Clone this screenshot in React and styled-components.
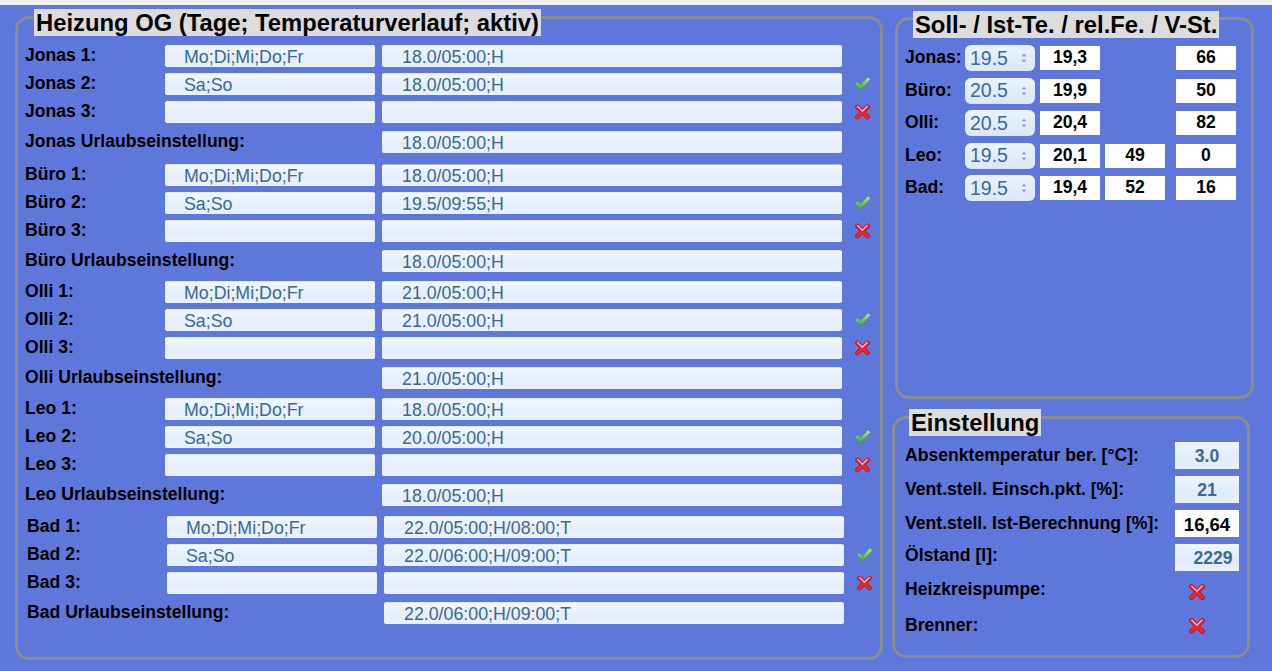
import React from "react";
import styled, { createGlobalStyle } from "styled-components";

const GlobalStyle = createGlobalStyle`
  html, body {
    margin: 0;
    padding: 0;
    background: #5e77db;
    font-family: "Liberation Sans", Arial, sans-serif;
  }
`;

const TopStrip = styled.div`
  height: 5px;
  background: #f1f1f3;
`;

const Main = styled.div`
  display: flex;
  align-items: flex-start;
  gap: 9px;
  padding: 11px 0 0 15px;
`;

const Panel = styled.div`
  box-sizing: border-box;
  flex-shrink: 0;
  width: ${(p) => p.width}px;
  height: ${(p) => p.height}px;
  margin-left: ${(p) => p.offsetLeft || 0}px;
  margin-top: ${(p) => p.offsetTop || 0}px;
  border: 3px solid #8a8c92;
  border-radius: 14px;
  display: flex;
  flex-flow: column nowrap;
  align-items: flex-start;
`;

const Title = styled.div`
  margin: ${(p) => p.top}px 0 0 ${(p) => p.left}px;
  padding: 0 2px;
  height: 27px;
  line-height: 28px;
  background: #dcdcdd;
  color: #000;
  font-size: 23.8px;
  font-weight: 700;
  white-space: nowrap;
`;

const RightColumn = styled.div`
  display: flex;
  flex-flow: column nowrap;
  gap: 17px;
`;

/* ---------- left panel ---------- */

const Groups = styled.div`
  display: flex;
  flex-flow: column nowrap;
  gap: 9px;
  margin-top: 9px;
`;

const Group = styled.div`
  display: flex;
  flex-flow: column nowrap;
  gap: 6px;
  margin-top: ${(p) => p.extra || 0}px;
  padding-left: ${(p) => (p.shift ? 9 : 7)}px;
`;

const Row = styled.div`
  display: grid;
  grid-template-columns: 133px 210px 460px 22px;
  column-gap: 7px;
  align-items: center;
  height: 22px;
  margin-top: ${(p) => (p.holiday ? 2 : 0)}px;
`;

const Label = styled.div`
  grid-column: ${(p) => (p.wide ? "span 2" : "auto")};
  color: #000;
  font-size: 17.6px;
  font-weight: 700;
  white-space: nowrap;
  line-height: 20px;
  margin-top: -2px;
`;

const Field = styled.div`
  grid-column: ${(p) => (p.col ? p.col : "auto")};
  box-sizing: border-box;
  height: 22px;
  padding-left: ${(p) => p.pad || 20}px;
  line-height: 23px;
  font-size: 17.8px;
  color: #3b6894;
  white-space: nowrap;
  background: linear-gradient(180deg, #f1f7fe 0%, #e4eefb 55%, #e8f1fc 100%);
  border-top: 1px solid ${(p) => (p.focused ? "#b3bdc9" : "#dfe9f6")};
  border-radius: 2px;
`;

const IconCell = styled.div`
  display: flex;
  align-items: center;
  padding-left: 5px;
`;

/* ---------- right top panel ---------- */

const TempRows = styled.div`
  display: flex;
  flex-flow: column nowrap;
  gap: 6.5px;
  margin-top: 7px;
  padding-left: 7px;
`;

const TempRow = styled.div`
  display: grid;
  grid-template-columns: 55px 70px 60px 60px 60px;
  column-gap: 5px;
  align-items: center;
  height: 26px;
`;

const SelectBox = styled.div`
  box-sizing: border-box;
  display: flex;
  align-items: center;
  justify-content: space-between;
  width: 70px;
  height: 26px;
  padding: 0 8px 0 5px;
  border-radius: 6px;
  background: linear-gradient(180deg, #eaf2fc 0%, #dbe7f6 100%);
  color: #386a9a;
  font-size: 19.5px;
`;

const ValueBox = styled.div`
  box-sizing: border-box;
  width: 60px;
  height: 24px;
  margin-left: ${(p) => p.push || 0}px;
  background: #fff;
  color: #000;
  font-size: 17.6px;
  font-weight: 700;
  text-align: center;
  line-height: 22px;
`;

/* ---------- settings panel ---------- */

const SettingRows = styled.div`
  display: flex;
  flex-flow: column nowrap;
  gap: 7px;
  margin-top: 6px;
  padding-left: 10px;
`;

const SettingRow = styled.div`
  display: grid;
  grid-template-columns: 270px 64px;
  align-items: center;
  min-height: 27px;
`;

const SettingLabel = styled.div`
  color: #000;
  font-size: 17.6px;
  font-weight: 700;
  white-space: nowrap;
  margin-top: ${(p) => p.lift || 0}px;
`;

const SettingInput = styled.div`
  box-sizing: border-box;
  height: 27px;
  line-height: 29px;
  font-size: ${(p) => (p.plain ? 18.5 : 17.6)}px;
  text-align: center;
  padding-left: ${(p) => p.indent || 0}px;
  color: ${(p) => (p.plain ? "#000" : "#3b6a96")};
  font-weight: 700;
  background: ${(p) =>
    p.plain ? "#fff" : "linear-gradient(180deg, #eef5fd 0%, #e0ebf9 60%, #e7f0fc 100%)"};
`;

const StatusIcon = styled.div`
  display: flex;
  align-items: center;
  padding-left: 13px;
`;

/* ---------- icons ---------- */

const CheckIcon = () => (
  <svg width="17" height="16" viewBox="0 0 17 16">
    <defs>
      <linearGradient id="ck" x1="0" y1="0" x2="0" y2="1">
        <stop offset="0" stopColor="#b2f29a" />
        <stop offset="1" stopColor="#3c9a33" />
      </linearGradient>
    </defs>
    <path
      d="M1 8 L3.8 6 L6.5 9 L14 1 L16.5 3.3 L6.5 14.5 Z"
      fill="url(#ck)"
      stroke="#4b9f41"
      strokeWidth="0.6"
      strokeLinejoin="round"
    />
  </svg>
);

const CrossIcon = () => (
  <svg width="18" height="18" viewBox="0 0 18 18">
    <path d="M3.5 3.5 L14.5 14.5 M14.5 3.5 L3.5 14.5" stroke="#c8121e" strokeWidth="4.8" strokeLinecap="round" />
    <path d="M3.5 3.5 L14.5 14.5 M14.5 3.5 L3.5 14.5" stroke="#e82a34" strokeWidth="3" strokeLinecap="round" />
    <path d="M3.8 3.2 L9 8.2 M14 3 L9.6 7.4" stroke="#f8b5bb" strokeWidth="1.4" strokeLinecap="round" />
  </svg>
);

const SpinArrows = () => (
  <svg width="6" height="10" viewBox="0 0 6 10">
    <path d="M3 0.5 L5.5 3.5 L0.5 3.5 Z M3 9.5 L5.5 6.5 L0.5 6.5 Z" fill="#93a6bd" />
  </svg>
);

/* ---------- data ---------- */

const rooms = [
  { name: "Jonas", temps: ["18.0/05:00;H", "18.0/05:00;H", "18.0/05:00;H"] },
  { name: "Büro", temps: ["18.0/05:00;H", "19.5/09:55;H", "18.0/05:00;H"], focused: true, extra: 2 },
  { name: "Olli", temps: ["21.0/05:00;H", "21.0/05:00;H", "21.0/05:00;H"] },
  { name: "Leo", temps: ["18.0/05:00;H", "20.0/05:00;H", "18.0/05:00;H"] },
  {
    name: "Bad",
    temps: ["22.0/05:00;H/08:00;T", "22.0/06:00;H/09:00;T", "22.0/06:00;H/09:00;T"],
    shift: true,
    extra: 1,
  },
];

const climate = [
  { name: "Jonas", soll: "19.5", ist: "19,3", feuchte: "", vst: "66" },
  { name: "Büro", soll: "20.5", ist: "19,9", feuchte: "", vst: "50" },
  { name: "Olli", soll: "20.5", ist: "20,4", feuchte: "", vst: "82" },
  { name: "Leo", soll: "19.5", ist: "20,1", feuchte: "49", vst: "0" },
  { name: "Bad", soll: "19.5", ist: "19,4", feuchte: "52", vst: "16" },
];

const RoomGroup = ({ room }) => (
  <Group shift={room.shift} extra={room.extra}>
    <Row>
      <Label>{room.name} 1:</Label>
      <Field pad={19}>Mo;Di;Mi;Do;Fr</Field>
      <Field focused={room.focused}>{room.temps[0]}</Field>
    </Row>
    <Row>
      <Label>{room.name} 2:</Label>
      <Field pad={19}>Sa;So</Field>
      <Field>{room.temps[1]}</Field>
      <IconCell>
        <CheckIcon />
      </IconCell>
    </Row>
    <Row>
      <Label>{room.name} 3:</Label>
      <Field />
      <Field />
      <IconCell>
        <CrossIcon />
      </IconCell>
    </Row>
    <Row holiday>
      <Label wide>{room.name} Urlaubseinstellung:</Label>
      <Field col={3}>{room.temps[2]}</Field>
    </Row>
  </Group>
);

const App = () => {
  return (
    <>
      <GlobalStyle />
      <TopStrip />
      <Main>
        <Panel width={868} height={644}>
          <Title top={-10} left={16}>
            Heizung OG (Tage; Temperaturverlauf; aktiv)
          </Title>
          <Groups>
            {rooms.map((room) => (
              <RoomGroup key={room.name} room={room} />
            ))}
          </Groups>
        </Panel>

        <RightColumn>
          <Panel width={359} height={382} offsetLeft={3} offsetTop={1}>
            <Title top={-9} left={15}>
              Soll- / Ist-Te. / rel.Fe. / V-St.
            </Title>
            <TempRows>
              {climate.map((c) => (
                <TempRow key={c.name}>
                  <Label>{c.name}:</Label>
                  <SelectBox>
                    <span>{c.soll}</span>
                    <SpinArrows />
                  </SelectBox>
                  <ValueBox>{c.ist}</ValueBox>
                  {c.feuchte ? <ValueBox>{c.feuchte}</ValueBox> : <span />}
                  <ValueBox push={6}>{c.vst}</ValueBox>
                </TempRow>
              ))}
            </TempRows>
          </Panel>

          <Panel width={358} height={242}>
            <Title top={-10} left={14}>
              Einstellung
            </Title>
            <SettingRows>
              <SettingRow>
                <SettingLabel>Absenktemperatur ber. [°C]:</SettingLabel>
                <SettingInput>3.0</SettingInput>
              </SettingRow>
              <SettingRow>
                <SettingLabel>Vent.stell. Einsch.pkt. [%]:</SettingLabel>
                <SettingInput>21</SettingInput>
              </SettingRow>
              <SettingRow>
                <SettingLabel>Vent.stell. Ist-Berechnung [%]:</SettingLabel>
                <SettingInput plain>16,64</SettingInput>
              </SettingRow>
              <SettingRow>
                <SettingLabel lift={-4}>Ölstand [l]:</SettingLabel>
                <SettingInput indent={12}>2229</SettingInput>
              </SettingRow>
              <SettingRow>
                <SettingLabel lift={-4}>Heizkreispumpe:</SettingLabel>
                <StatusIcon>
                  <CrossIcon />
                </StatusIcon>
              </SettingRow>
              <SettingRow>
                <SettingLabel>Brenner:</SettingLabel>
                <StatusIcon>
                  <CrossIcon />
                </StatusIcon>
              </SettingRow>
            </SettingRows>
          </Panel>
        </RightColumn>
      </Main>
    </>
  );
};

export default App;
